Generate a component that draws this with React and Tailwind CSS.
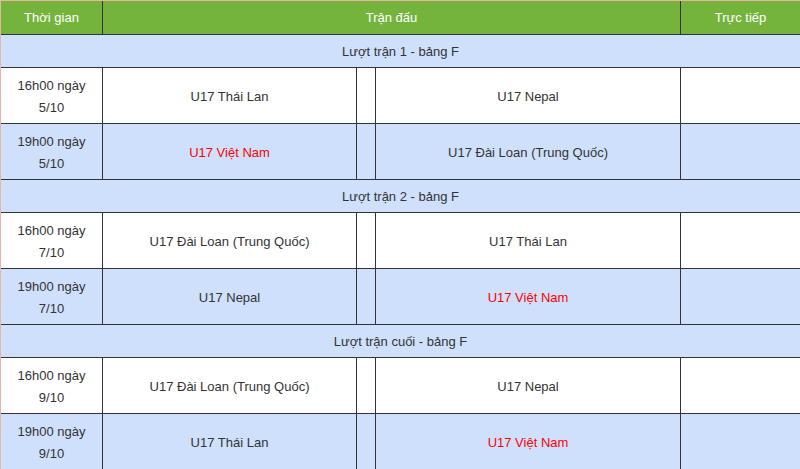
import React from "react";

const groups = [
  {
    title: "Lượt trận 1 - bảng F",
    rows: [
      { time: ["16h00 ngày", "5/10"], a: "U17 Thái Lan", b: "U17 Nepal" },
      { time: ["19h00 ngày", "5/10"], a: "U17 Việt Nam", b: "U17 Đài Loan (Trung Quốc)", aRed: true },
    ],
  },
  {
    title: "Lượt trận 2 - bảng F",
    rows: [
      { time: ["16h00 ngày", "7/10"], a: "U17 Đài Loan (Trung Quốc)", b: "U17 Thái Lan" },
      { time: ["19h00 ngày", "7/10"], a: "U17 Nepal", b: "U17 Việt Nam", bRed: true },
    ],
  },
  {
    title: "Lượt trận cuối - bảng F",
    rows: [
      { time: ["16h00 ngày", "9/10"], a: "U17 Đài Loan (Trung Quốc)", b: "U17 Nepal" },
      { time: ["19h00 ngày", "9/10"], a: "U17 Thái Lan", b: "U17 Việt Nam", bRed: true },
    ],
  },
];

function DataRow({ r, blue }) {
  const bg = blue ? "bg-[#cfe0fc]" : "bg-white";
  return (
    <div className={`flex h-[56px] border-b border-[#333] ${bg}`}>
      <div className="w-[102px] shrink-0 border-r border-[#333] pt-[2px] flex flex-col items-center justify-center leading-[22px]">
        <span>{r.time[0]}</span>
        <span>{r.time[1]}</span>
      </div>
      <div className={`w-[254px] shrink-0 border-r border-[#333] pt-[2px] flex items-center justify-center ${r.aRed ? "text-[#ff0000]" : ""}`}>
        {r.a}
      </div>
      <div className="w-[19px] shrink-0 border-r border-[#333]"></div>
      <div className={`w-[305px] shrink-0 border-r border-[#333] pt-[2px] flex items-center justify-center ${r.bRed ? "text-[#ff0000]" : ""}`}>
        {r.b}
      </div>
      <div className="flex-1"></div>
    </div>
  );
}

export default function App() {
  return (
    <div
      className="w-[800px] h-[469px] overflow-hidden border-t border-l border-[#eab4a2] bg-white text-[13px] text-[#333]"
      style={{ fontFamily: "'Liberation Sans', Arial, sans-serif" }}
    >
      <div className="flex h-[34px] border-b border-[#333] bg-[#74b43c] text-white">
        <div className="w-[102px] shrink-0 border-r border-[#333] flex items-center justify-center">Thời gian</div>
        <div className="w-[578px] shrink-0 border-r border-[#333] flex items-center justify-center">Trận đấu</div>
        <div className="flex-1 flex items-center justify-center">Trực tiếp</div>
      </div>
      {groups.map((g) => (
        <React.Fragment key={g.title}>
          <div className="h-[33px] border-b border-[#333] bg-[#cfe0fc] pt-[2px] flex items-center justify-center">{g.title}</div>
          {g.rows.map((r, i) => (
            <DataRow key={i} r={r} blue={i === 1} />
          ))}
        </React.Fragment>
      ))}
    </div>
  );
}
